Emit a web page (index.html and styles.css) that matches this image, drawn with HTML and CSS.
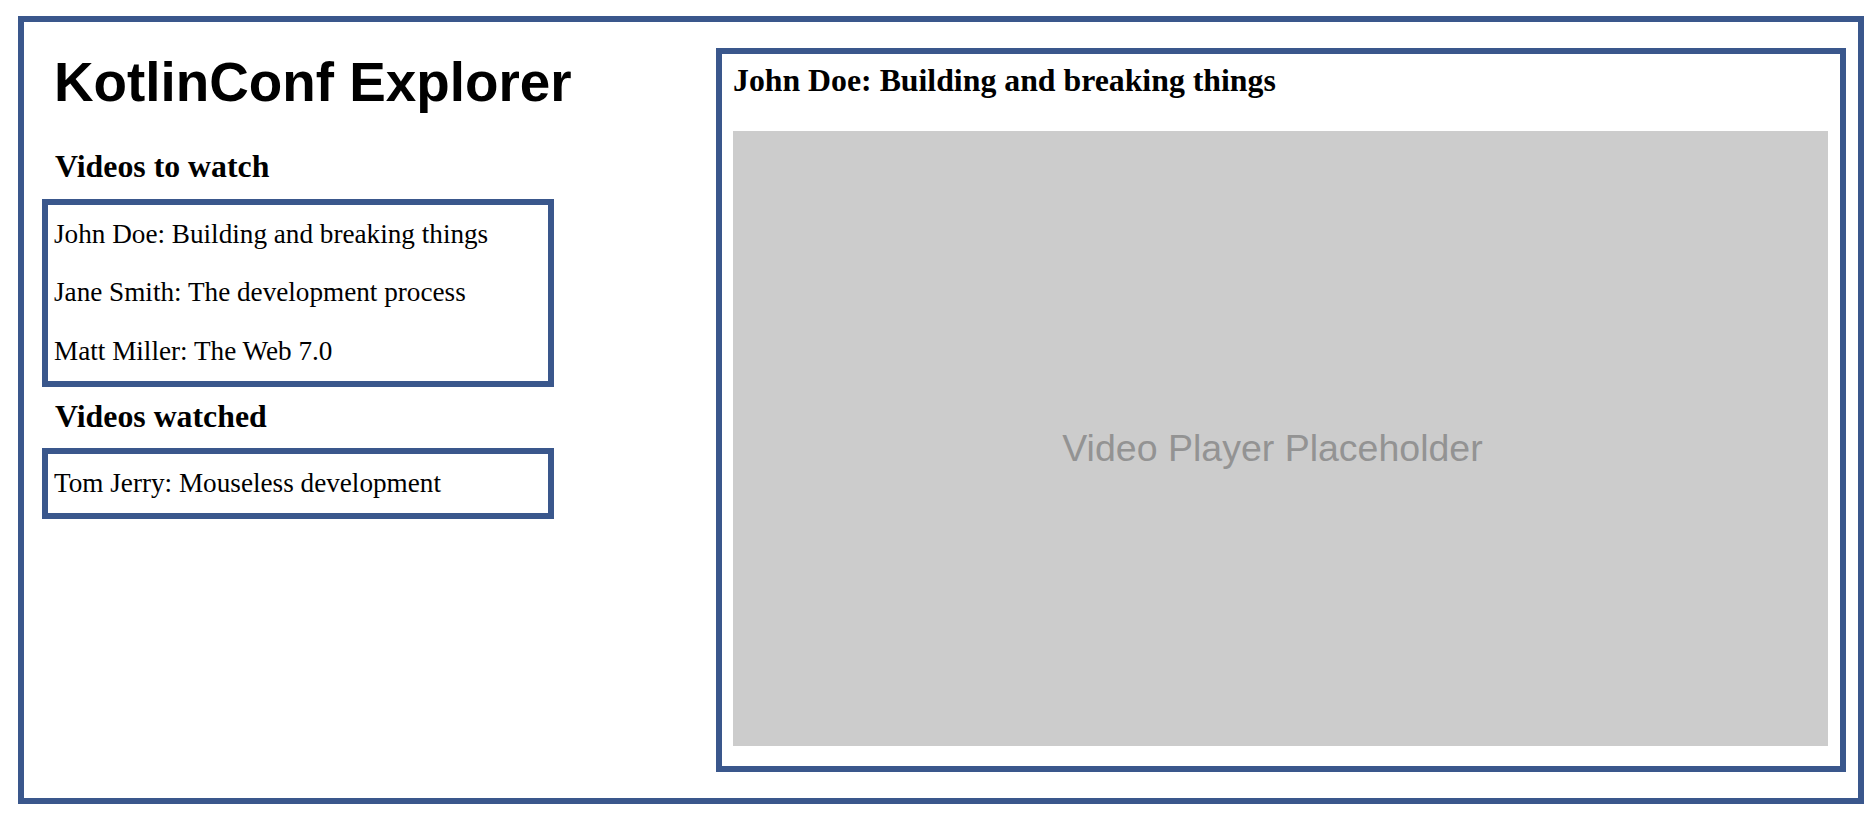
FILE: index.html
```html
<!DOCTYPE html>
<html lang="en">
<head>
<meta charset="utf-8">
<title>KotlinConf Explorer</title>
<link rel="stylesheet" href="styles.css">
</head>
<body>
<div class="app">
  <div class="sidebar">
    <h1 class="title">KotlinConf Explorer</h1>
    <h3 class="section-title">Videos to watch</h3>
    <div class="video-list">
      <p class="video-item">John Doe: Building and breaking things</p>
      <p class="video-item">Jane Smith: The development process</p>
      <p class="video-item">Matt Miller: The Web 7.0</p>
    </div>
    <h3 class="section-title">Videos watched</h3>
    <div class="video-list">
      <p class="video-item">Tom Jerry: Mouseless development</p>
    </div>
  </div>
  <div class="player">
    <h3 class="player-title">John Doe: Building and breaking things</h3>
    <div class="player-screen">Video Player Placeholder</div>
  </div>
</div>
</body>
</html>
```

FILE: styles.css
```css
html, body {
  margin: 0;
  padding: 0;
  background: #ffffff;
}

body {
  font-family: "Liberation Serif", "Times New Roman", serif;
  color: #000000;
}

.app {
  box-sizing: border-box;
  margin: 16px 12px 12px 18px;
  height: 788px;
  border: 6px solid #3a578c;
  display: flex;
  flex-direction: row;
}

.sidebar {
  box-sizing: border-box;
  width: 692px;
  flex: 0 0 692px;
  padding: 29px 0 0 18px;
  display: flex;
  flex-direction: column;
  align-items: flex-start;
}

.title {
  font-family: "Liberation Sans", Arial, sans-serif;
  font-weight: bold;
  font-size: 54.8px;
  line-height: 62px;
  margin: 0 0 24.2px 12px;
}

.section-title {
  font-family: "Liberation Serif", "Times New Roman", serif;
  font-weight: bold;
  font-size: 31.8px;
  line-height: 36px;
  margin: 12.3px 0 13.3px 13px;
}

.video-list {
  box-sizing: border-box;
  width: 512px;
  border: 6px solid #3a578c;
  padding: 0 0 0 6px;
  display: flex;
  flex-direction: column;
}

.video-item {
  margin: 0;
  font-size: 27.2px;
  line-height: 31px;
  padding: 13.8px 0;
}

.player {
  box-sizing: border-box;
  flex: 1 1 auto;
  margin: 26px 12px 26px 0;
  border: 6px solid #3a578c;
  padding: 8.7px 12px 20px 11px;
  display: flex;
  flex-direction: column;
}

.player-title {
  font-family: "Liberation Serif", "Times New Roman", serif;
  font-weight: bold;
  font-size: 31.8px;
  line-height: 36px;
  margin: 0 0 32.3px 0;
}

.player-screen {
  flex: 1 1 auto;
  background: #cccccc;
  display: flex;
  align-items: center;
  justify-content: center;
  font-family: "Liberation Sans", Arial, sans-serif;
  font-size: 37.5px;
  color: #939393;
  padding: 20px 16px 0 0;
  box-sizing: border-box;
}
```
